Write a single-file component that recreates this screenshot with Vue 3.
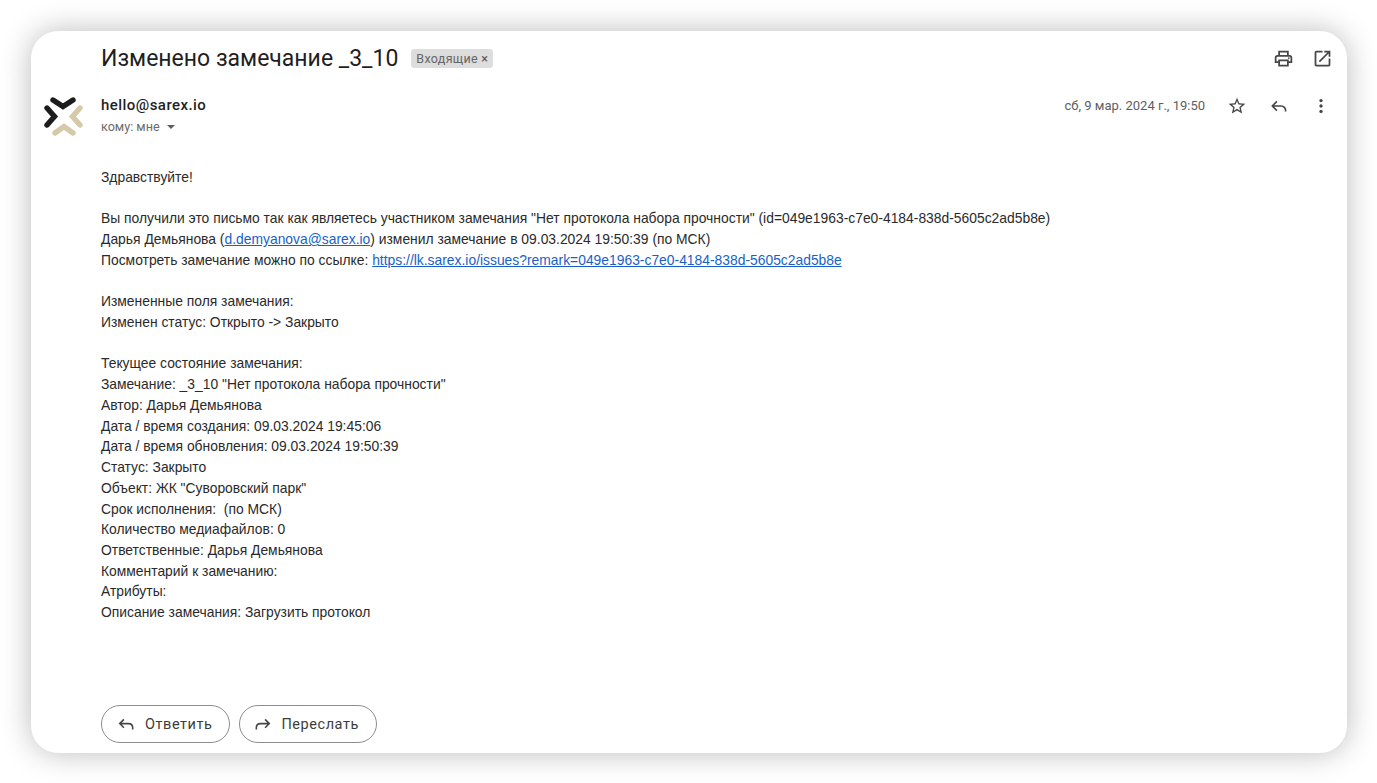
<script setup>
const bodyBlocks = [
  ['Здравствуйте!'],
  [
    'Вы получили это письмо так как являетесь участником замечания "Нет протокола набора прочности" (id=049e1963-c7e0-4184-838d-5605c2ad5b8e)',
    [{ t: 'Дарья Демьянова (' }, { t: 'd.demyanova@sarex.io', link: true }, { t: ') изменил замечание в 09.03.2024 19:50:39 (по МСК)' }],
    [{ t: 'Посмотреть замечание можно по ссылке: ' }, { t: 'https://lk.sarex.io/issues?remark=049e1963-c7e0-4184-838d-5605c2ad5b8e', link: true }],
  ],
  ['Измененные поля замечания:', 'Изменен статус: Открыто -> Закрыто'],
  [
    'Текущее состояние замечания:',
    'Замечание: _3_10 "Нет протокола набора прочности"',
    'Автор: Дарья Демьянова',
    'Дата / время создания: 09.03.2024 19:45:06',
    'Дата / время обновления: 09.03.2024 19:50:39',
    'Статус: Закрыто',
    'Объект: ЖК "Суворовский парк"',
    'Срок исполнения:  (по МСК)',
    'Количество медиафайлов: 0',
    'Ответственные: Дарья Демьянова',
    'Комментарий к замечанию:',
    'Атрибуты:',
    'Описание замечания: Загрузить протокол',
  ],
]
const parts = (line) => (typeof line === 'string' ? [{ t: line }] : line)
</script>

<template>
  <div class="page">
    <main class="card">
      <header class="subject">
        <h1 class="title">Изменено замечание _3_10</h1>
        <span class="chip">Входящие <span class="chip-x">×</span></span>
        <div class="top-icons">
          <svg viewBox="0 0 24 24" width="21" height="21"><path fill="#444746" d="M19 8h-1V3H6v5H5c-1.66 0-3 1.34-3 3v6h4v4h12v-4h4v-6c0-1.66-1.34-3-3-3zM8 5h8v3H8V5zm8 14H8v-4h8v4zm2-4v-2H6v2H4v-4c0-.55.45-1 1-1h14c.55 0 1 .45 1 1v4h-2z"/><circle fill="#444746" cx="18" cy="11.5" r="1"/></svg>
          <svg viewBox="0 0 24 24" width="21" height="21"><path fill="#444746" d="M19 19H5V5h7V3H5c-1.11 0-2 .9-2 2v14c0 1.1.89 2 2 2h14c1.1 0 2-.9 2-2v-7h-2v7zM14 3v2h3.59l-9.83 9.83 1.41 1.41L19 6.41V10h2V3h-7z"/></svg>
        </div>
      </header>

      <section class="meta">
        <svg class="logo" viewBox="0 0 40 40" width="40" height="40">
          <g fill="none" stroke-width="5.4" stroke-linecap="round">
            <path stroke="#1c1c1c" d="M10 4 L20 10.5 L30 4" />
            <path stroke="#1c1c1c" d="M4 12 L11.5 20.5 L4 29" />
            <path stroke="#d6c9a8" d="M37 12 L29.5 20.5 L37 29" />
            <path stroke="#d6c9a8" d="M12 37 L21 30.5 L30 37" />
          </g>
        </svg>
        <div class="sender">
          <div class="from">hello@sarex.io</div>
          <div class="to">кому: мне <span class="caret"></span></div>
        </div>
        <div class="actions">
          <span class="date">сб, 9 мар. 2024 г., 19:50</span>
          <svg viewBox="0 0 24 24" width="20" height="20"><path fill="#444746" d="M22 9.24l-7.19-.62L12 2 9.19 8.63 2 9.24l5.46 4.73L5.82 21 12 17.27 18.18 21l-1.63-7.03L22 9.24zM12 15.4l-3.76 2.27 1-4.28-3.32-2.88 4.38-.38L12 6.1l1.71 4.04 4.38.38-3.32 2.88 1 4.28L12 15.4z"/></svg>
          <svg viewBox="0 0 24 24" width="20" height="20"><path fill="none" stroke="#444746" stroke-width="2" d="M9.5 6.5 4 12l5.5 5.5M4 12h10c3.5 0 6 2.2 6 6.5"/></svg>
          <svg viewBox="0 0 24 24" width="20" height="20"><circle fill="#444746" cx="12" cy="5.5" r="2"/><circle fill="#444746" cx="12" cy="12" r="2"/><circle fill="#444746" cx="12" cy="18.5" r="2"/></svg>
        </div>
      </section>

      <article class="body">
        <p v-for="(block, i) in bodyBlocks" :key="i" class="block">
          <span v-for="(line, j) in block" :key="j" class="line">
            <template v-for="(p, k) in parts(line)" :key="k">
              <a v-if="p.link" class="link">{{ p.t }}</a>
              <template v-else>{{ p.t }}</template>
            </template>
          </span>
        </p>
      </article>

      <footer class="buttons">
        <button class="btn reply">
          <svg viewBox="0 0 24 24" width="20" height="20"><path fill="none" stroke="#444746" stroke-width="1.9" d="M9.5 6.5 4.5 11.5l5 5M4.5 11.5H15c3 0 5 2 5 5v2"/></svg>
          Ответить
        </button>
        <button class="btn forward">
          <svg viewBox="0 0 24 24" width="20" height="20"><path fill="none" stroke="#444746" stroke-width="1.9" d="M14.5 6.5l5 5-5 5M19.5 11.5H9c-3 0-5 2-5 5v2"/></svg>
          Переслать
        </button>
      </footer>
    </main>
  </div>
</template>

<style>
html, body { margin: 0; background: #fff; }
</style>

<style scoped>
.page {
  width: 1377px;
  height: 783px;
  padding: 31px 30px 30px 31px;
  box-sizing: border-box;
  overflow: hidden;
  background: #fff;
}
.card {
  height: 722px;
  box-sizing: border-box;
  padding: 0 0 10px;
  background: #fff;
  border-radius: 27px;
  box-shadow: 0 0 30px rgba(0, 0, 0, 0.27);
  display: flex;
  flex-direction: column;
  color: #222;
}
.subject {
  display: flex;
  align-items: center;
  height: 54px;
  padding: 1px 14px 0 70px;
  box-sizing: border-box;
}
.title {
  margin: 0;
  font: 400 23px/30px Roboto, sans-serif;
  color: #1f1f1f;
}
.chip {
  margin-left: 13px;
  padding: 0 5px;
  height: 19px;
  background: #ddd;
  border-radius: 3px;
  font: 12.5px/19px Roboto, sans-serif;
  letter-spacing: 0.3px;
  color: #666;
}
.chip-x { color: #555; }
.top-icons {
  margin-left: auto;
  display: flex;
  gap: 18px;
}
.meta {
  display: flex;
  align-items: flex-start;
  height: 66px;
  padding-left: 12px;
}
.logo { margin-top: 11px; flex: none; }
.sender { margin-left: 18px; padding-top: 10px; }
.from {
  font: 500 15px/20px Roboto, sans-serif;
  color: #1f1f1f;
  letter-spacing: 0.45px;
}
.to {
  margin-top: 3px;
  font: 12.6px/18px Roboto, sans-serif;
  color: #6b6b6b;
}
.caret {
  display: inline-block;
  margin-left: 4px;
  vertical-align: 2px;
  border: 4.5px solid transparent;
  border-top: 4.5px solid #5e5e5e;
  border-bottom: 0;
}
.actions {
  margin-left: auto;
  padding: 11px 16px 0 0;
  display: flex;
  align-items: center;
  gap: 22px;
}
.date {
  font: 13px/20px Roboto, sans-serif;
  color: #5e5e5e;
}
.body {
  padding: 16px 0 0 70px;
  font: 13.86px/20.72px "Liberation Sans", Arial, sans-serif;
  color: #2a2a2a;
}
.block { margin: 0 0 20.72px; white-space: pre-wrap; }
.line { display: block; }
.link { color: #1a5fc8; text-decoration: underline; }
.buttons {
  margin-top: auto;
  display: flex;
  gap: 9px;
  padding-left: 70px;
}
.btn {
  height: 38px;
  box-sizing: border-box;
  display: flex;
  align-items: center;
  gap: 8px;
  background: #fff;
  border: 1px solid #8a8d91;
  border-radius: 19px;
  font: 400 14.5px Roboto, sans-serif;
  letter-spacing: 0.55px;
  color: #3c3c3c;
}
.reply { padding: 0 17px 0 14px; gap: 9px; }
.forward { padding: 0 17px 0 13px; }
</style>
